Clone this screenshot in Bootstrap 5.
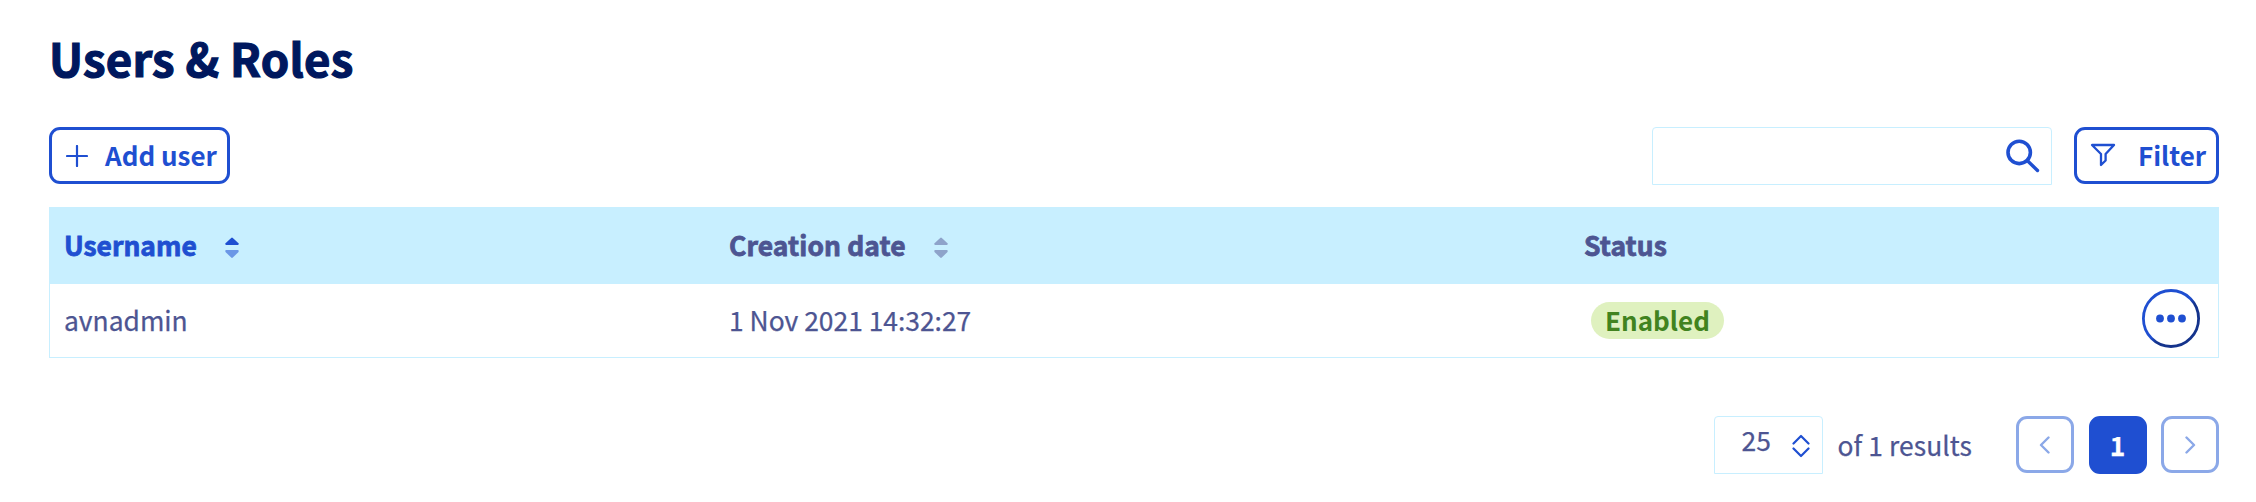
<!DOCTYPE html>
<html lang="en">
<head>
<meta charset="utf-8">
<title>Users &amp; Roles</title>
<link href="https://cdn.jsdelivr.net/npm/bootstrap@5.3.0/dist/css/bootstrap.min.css" rel="stylesheet">
<style>
:root{--blue:#1f4fd1;--slate:#4d5592;--sky:#c8efff}
body{font-family:"Noto Sans CJK JP","Noto Sans CJK SC",sans-serif;font-size:26.4px;line-height:38px;color:var(--slate);background:#fff;overflow:hidden;-webkit-text-stroke:.25px currentColor}
.page{padding:27px 37px 0 49px}
h1{font-size:45.5px;line-height:60px;font-weight:700;color:#00185e;margin:0 0 40px;letter-spacing:.25px;-webkit-text-stroke:1.2px currentColor}
svg{display:block;flex:none}
.btn-line{height:57px;border:3px solid var(--blue);border-radius:11px;color:var(--blue);font-size:26px;line-height:38px;font-weight:700;padding:0 0 0 14px;text-align:left;-webkit-text-stroke:0}
.btn-line span{padding-bottom:2px;white-space:nowrap}
.add-btn{width:181px}
.add-label{margin-left:17px}
.filter-btn{width:145px;padding-left:13px;margin-left:22px}
.filter-label{margin-left:22px}
.filter-icon{margin-bottom:1px}
.search-box,.size-box{border:1px solid var(--sky);border-radius:4px 4px 0 0;background:#fff}
.search-box{width:400px;height:58px}
.search-box input{font-size:26px;min-width:0;outline:0;background:none}
.search-icon{margin-right:11px}
.user-table{margin:22px 0 0;table-layout:fixed;color:inherit;border:1px solid var(--sky);border-collapse:separate;border-spacing:0;height:151px}
.user-table th,.user-table td{padding:0 0 2px 14px;vertical-align:middle;border:0;color:inherit;background:none}
.user-table th{background:var(--sky);height:76px;font-weight:700;letter-spacing:.12px;-webkit-text-stroke:.8px currentColor}
.user-table td{height:73px}
.user-table th.sorted{color:var(--blue);letter-spacing:0}
.sort-icon{margin:6px 0 0 28px;position:relative}
.status-pill{height:37px;width:133px;margin:2px 0 0 7px;padding-bottom:1px;border-radius:19px;background:#dff1bf;color:#41831f;font-size:26px;font-weight:700;-webkit-text-stroke:0}
.user-table td.actions{padding:0 0 5px}
.more-btn{width:58px;height:58px;margin-right:18px}
.pager{margin-top:58px}
.size-box{width:109px;height:58px;padding-left:27px}
.size-label{margin-top:4px}
.size-icon{margin:17px 0 0 21px}
.result-label{margin:10px 44px 0 15px;letter-spacing:.08px}
.page-list{gap:14.5px}
.page-btn{width:58px;height:57px;border:3px solid #8ba8e8;border-radius:11px;background:#fff}
.page-btn.current{height:58px;background:var(--blue);border-color:var(--blue);color:#fff;font-weight:700}
</style>
</head>
<body>
<main class="page">
  <h1>Users &amp; Roles</h1>
  <div class="d-flex align-items-start justify-content-between">
    <button class="btn btn-line add-btn d-flex align-items-center" type="button">
      <svg width="22" height="22" viewBox="0 0 22 22" fill="none" stroke="currentColor" stroke-width="2.2" stroke-linecap="round"><path d="M11 1v20M1 11h20"/></svg>
      <span class="add-label">Add user</span>
    </button>
    <div class="d-flex align-items-start">
      <div class="search-box d-flex align-items-center">
        <input class="border-0 flex-grow-1 h-100" type="text" aria-label="Search">
        <svg class="search-icon" width="34" height="34" viewBox="0 0 34 34" fill="none" stroke="#1f4fd1" stroke-linecap="round"><circle cx="13.2" cy="13.4" r="11.2" stroke-width="3.6"/><path d="M21.5 21.7 31.5 31.5" stroke-width="3.4"/></svg>
      </div>
      <button class="btn btn-line filter-btn d-flex align-items-center" type="button">
        <svg class="filter-icon" width="26" height="24" viewBox="0 0 26 24" fill="none" stroke="currentColor" stroke-width="2.3" stroke-linejoin="round"><path d="M2 2h22l-8.400 9v6.500L11 22V11z"/></svg>
        <span class="filter-label">Filter</span>
      </button>
    </div>
  </div>
  <table class="table user-table">
    <colgroup><col style="width:665px"><col style="width:855px"><col style="width:400px"><col></colgroup>
    <thead><tr>
      <th class="sorted"><div class="d-flex align-items-center"><span>Username</span>
        <svg class="sort-icon" width="14" height="22" viewBox="0 0 14 22" fill="#1f4fd1"><path d="M6.2.9Q7 .2 7.8.9L13.5 6.2Q14 8 13 8H1Q0 8 .5 6.2Z"/><path opacity=".55" d="M6.2 20.6Q7 21.3 7.8 20.6L13.5 15Q14 13 13 13H1Q0 13 .5 15Z"/></svg></div></th>
      <th><div class="d-flex align-items-center"><span>Creation date</span>
        <svg class="sort-icon" width="14" height="22" viewBox="0 0 14 22" fill="#8ea3ca"><path d="M6.2.9Q7 .2 7.8.9L13.5 6.2Q14 8 13 8H1Q0 8 .5 6.2Z"/><path d="M6.2 20.6Q7 21.3 7.8 20.6L13.5 15Q14 13 13 13H1Q0 13 .5 15Z"/></svg></div></th>
      <th>Status</th><th></th>
    </tr></thead>
    <tbody><tr>
      <td>avnadmin</td>
      <td>1 Nov 2021 14:32:27</td>
      <td><div class="status-pill d-flex align-items-center justify-content-center">Enabled</div></td>
      <td class="actions"><button class="more-btn btn p-0 border-0 d-block ms-auto" type="button" aria-label="Actions">
        <svg width="58" height="59" viewBox="0 0 58 59"><defs><linearGradient id="ring" x1="0" y1="0" x2="1" y2="1"><stop offset=".49" stop-color="#1f4fd1"/><stop offset=".58" stop-color="#14338c"/></linearGradient></defs><ellipse cx="29" cy="29.5" rx="27.6" ry="28" fill="#fff" stroke="url(#ring)" stroke-width="2.8"/><g fill="#1f4fd1"><circle cx="18" cy="29.5" r="3.9"/><circle cx="29" cy="29.5" r="3.9"/><circle cx="40" cy="29.5" r="3.9"/></g></svg></button></td>
    </tr></tbody>
  </table>
  <div class="pager d-flex justify-content-end align-items-start">
    <div class="size-box d-flex"><span class="size-label">25</span>
      <svg class="size-icon" width="18" height="24" viewBox="0 0 18 24" fill="none" stroke="#1f4fd1" stroke-width="2.2" stroke-linecap="round" stroke-linejoin="round"><path d="M1.5 9.5 9 2l7.5 7.5M1.5 14.5 9 22l7.5-7.5"/></svg></div>
    <span class="result-label">of 1 results</span>
    <div class="page-list d-flex">
      <div class="page-btn d-flex align-items-center justify-content-center"><svg width="12" height="18" viewBox="0 0 12 18" fill="none" stroke="#8ba8e8" stroke-width="2.4" stroke-linecap="round" stroke-linejoin="round"><path d="M9.5 1.5 2 9l7.5 7.5"/></svg></div>
      <div class="page-btn current d-flex align-items-center justify-content-center">1</div>
      <div class="page-btn d-flex align-items-center justify-content-center"><svg width="12" height="18" viewBox="0 0 12 18" fill="none" stroke="#8ba8e8" stroke-width="2.4" stroke-linecap="round" stroke-linejoin="round"><path d="M2.5 1.5 10 9l-7.5 7.5"/></svg></div>
    </div>
  </div>
</main>
<script src="https://cdn.jsdelivr.net/npm/bootstrap@5.3.0/dist/js/bootstrap.bundle.min.js"></script>
</body>
</html>
